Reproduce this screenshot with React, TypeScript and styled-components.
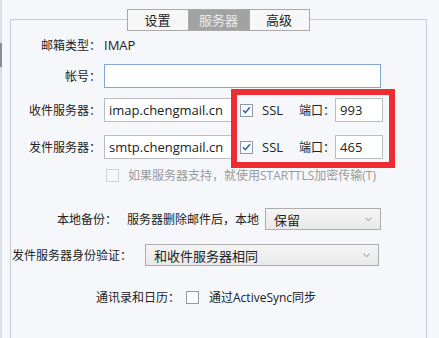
import React from 'react';
import styled, { createGlobalStyle } from 'styled-components';

const GlobalStyle = createGlobalStyle`
  html, body {
    margin: 0;
    padding: 0;
    background: #f5f7fb;
  }
  body {
    font-family: 'Open Sans', 'Noto Sans CJK SC', sans-serif;
    font-size: 12px;
    color: #222;
  }
`;

const Page = styled.div`
  display: flex;
  height: 338px;
  overflow: hidden;
`;

const Rail = styled.div`
  width: 2px;
  background: #dadde2;
  padding-top: 43px;
`;

const RailThumb = styled.div`
  height: 24px;
  background: #8a8d92;
`;

const Panel = styled.div`
  position: relative;
  flex: 1;
  margin: 19px 12px 0 8px;
  border: 1px solid #c9ccd2;
  border-bottom: none;
  height: 340px;
`;

const Tabs = styled.div`
  display: flex;
  justify-content: center;
  margin-top: -11px;
`;

const Tab = styled.div<{ $active?: boolean; $w: number }>`
  width: ${({ $w }) => $w}px;
  height: 20px;
  line-height: 20px;
  text-align: center;
  border: 1px solid #a9a9a9;
  margin-left: -1px;
  font-size: 13px;
  background: ${({ $active }) => ($active ? '#a2a2a2' : '#f7f7f7')};
  color: ${({ $active }) => ($active ? '#ececec' : '#222')};
`;

const Row = styled.div<{ $top: number; $h: number; $left?: number }>`
  display: flex;
  align-items: center;
  margin-top: ${({ $top }) => $top}px;
  height: ${({ $h }) => $h}px;
  padding-left: ${({ $left }) => $left ?? 0}px;
  white-space: nowrap;
`;

const Label = styled.span`
  width: 90px;
  text-align: right;
  margin-right: 3px;
`;

const Text = styled.span<{ $gap?: number; $muted?: boolean; $latin?: boolean }>`
  margin-left: ${({ $gap }) => $gap ?? 0}px;
  color: ${({ $muted }) => ($muted ? '#9a9a9a' : '#222')};
  font-size: ${({ $latin }) => ($latin ? 13 : 12)}px;
`;

const Input = styled.div<{ $w: number; $focus?: boolean }>`
  box-sizing: border-box;
  width: ${({ $w }) => $w}px;
  height: 24px;
  line-height: 22px;
  padding-left: 4px;
  border: 1px solid ${({ $focus }) => ($focus ? '#7fa6d4' : '#b9bcc1')};
  background: #fff;
  font-size: 13px;
  overflow: hidden;
`;

const Box = styled.span<{ $gap?: number; $muted?: boolean }>`
  box-sizing: border-box;
  width: 13px;
  height: 13px;
  margin-left: ${({ $gap }) => $gap ?? 0}px;
  border: 1px solid ${({ $muted }) => ($muted ? '#cfd2d6' : '#8e9aa8')};
  background: ${({ $muted }) => ($muted ? '#f6f7f9' : '#fbfcfd')};
  display: inline-flex;
  align-items: center;
  justify-content: center;
`;

const Select = styled.div<{ $w: number; $gap?: number }>`
  box-sizing: border-box;
  display: flex;
  align-items: center;
  justify-content: space-between;
  width: ${({ $w }) => $w}px;
  height: 22px;
  margin-left: ${({ $gap }) => $gap ?? 0}px;
  padding: 0 8px;
  border: 1px solid #adadad;
  background: linear-gradient(#f5f5f5, #e9e9e9);
  font-size: 13px;
`;

const Marker = styled.div`
  position: absolute;
  left: 220px;
  top: 69px;
  width: 164px;
  height: 79px;
  box-sizing: border-box;
  border: 6px solid #ee2d33;
  pointer-events: none;
`;

const Check = () => (
  <svg width="9" height="8" viewBox="0 0 9 8">
    <path d="M1 4.2 L3.4 6.6 L8 1.2" fill="none" stroke="#3567b0" strokeWidth="1.5" />
  </svg>
);

const Chevron = () => (
  <svg width="7" height="5" viewBox="0 0 7 5">
    <path d="M0.5 0.8 L3.5 3.8 L6.5 0.8" fill="none" stroke="#8a8a8a" strokeWidth="1" />
  </svg>
);

export default function App() {
  return (
    <>
      <GlobalStyle />
      <Page>
        <Rail>
          <RailThumb />
        </Rail>
        <Panel>
          <Tabs>
            <Tab $w={60}>设置</Tab>
            <Tab $w={60} $active>服务器</Tab>
            <Tab $w={59}>高级</Tab>
          </Tabs>

          <Row $top={4} $h={20}>
            <Label>邮箱类型：</Label>
            <Text $latin>IMAP</Text>
          </Row>
          <Row $top={9} $h={24}>
            <Label>帐号：</Label>
            <Input $w={277} $focus />
          </Row>
          <Row $top={10} $h={24}>
            <Label>收件服务器：</Label>
            <Input $w={130}>imap.chengmail.cn</Input>
            <Box $gap={6}>
              <Check />
            </Box>
            <Text $gap={9} $latin>SSL</Text>
            <Text $gap={16}>端口：</Text>
            <Input $w={48}>993</Input>
          </Row>
          <Row $top={13} $h={24}>
            <Label>发件服务器：</Label>
            <Input $w={130}>smtp.chengmail.cn</Input>
            <Box $gap={6}>
              <Check />
            </Box>
            <Text $gap={9} $latin>SSL</Text>
            <Text $gap={16}>端口：</Text>
            <Input $w={48}>465</Input>
          </Row>
          <Row $top={8} $h={16} $left={95}>
            <Box $muted />
            <Text $gap={9} $muted>如果服务器支持，就使用STARTTLS加密传输(T)</Text>
          </Row>

          <Row $top={25} $h={22} $left={46}>
            <Text>本地备份：</Text>
            <Text $gap={10}>服务器删除邮件后，本地</Text>
            <Select $w={116} $gap={6}>
              保留
              <Chevron />
            </Select>
          </Row>
          <Row $top={14} $h={22} $left={1}>
            <Text>发件服务器身份验证：</Text>
            <Select $w={234} $gap={13}>
              和收件服务器相同
              <Chevron />
            </Select>
          </Row>
          <Row $top={22} $h={18} $left={85}>
            <Text>通讯录和日历：</Text>
            <Box $gap={6} />
            <Text $gap={10}>通过ActiveSync同步</Text>
          </Row>

          <Marker />
        </Panel>
      </Page>
    </>
  );
}
